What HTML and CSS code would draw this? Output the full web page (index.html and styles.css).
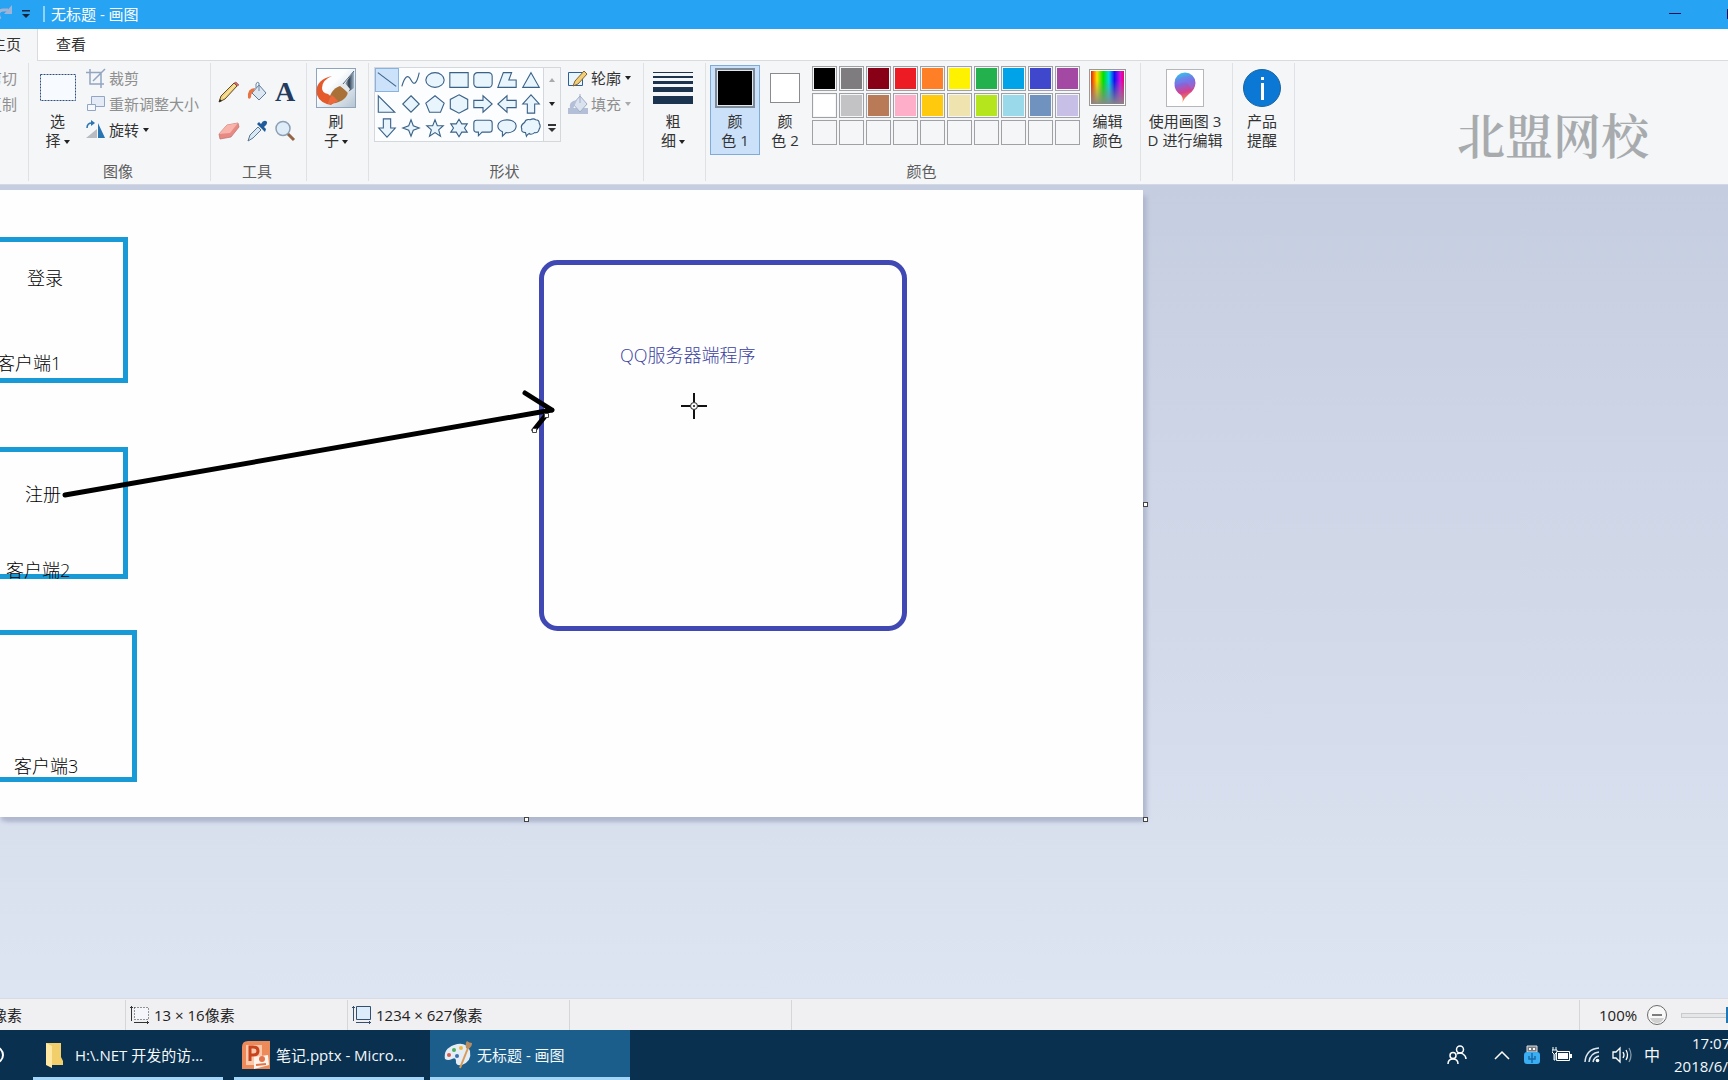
FILE: index.html
```html
<!DOCTYPE html>
<html lang="zh-CN">
<head>
<meta charset="utf-8">
<title>无标题 - 画图</title>
<link rel="stylesheet" href="styles.css">
</head>
<body>
<div class="app">
  <header class="titlebar">
    <button class="icon-btn" aria-label="重做"><svg width="14" height="20" viewBox="0 0 14 20"><path d="M0 15Q-4 7 3 6h5" fill="none" stroke="#9fb3d6" stroke-width="3"/><path d="M12 1v9H4z" fill="#9fb3d6"/></svg></button>
    <button class="icon-btn quick" aria-label="自定义快速访问工具栏"><svg width="8" height="8" viewBox="0 0 8 8"><path d="M0 0h8v1.500H0zM0 4h8L4 8z" fill="#12243c"/></svg></button>
    <span class="title-divider"></span>
    <h1 class="title">无标题 - 画图</h1>
    <div class="window-buttons">
      <button class="icon-btn" aria-label="最小化"><svg width="12" height="12" viewBox="0 0 12 12"><path d="M0 5.500h12" stroke="#1a1050"/></svg></button>
      <button class="icon-btn" aria-label="最大化"><svg width="10" height="10" viewBox="0 0 10 10"><rect x=".5" y=".5" width="9" height="9" fill="none" stroke="#1a1050" stroke-width="2"/></svg></button>
    </div>
  </header>

  <nav class="tabs">
    <button class="tab tab-active"><span>主页</span></button>
    <button class="tab">查看</button>
  </nav>

  <section class="ribbon">
    <div class="group clipboard">
      <div class="rows">
        <button class="small muted">剪切</button>
        <button class="small muted">复制</button>
      </div>
    </div>

    <div class="group image">
      <div class="tools-line">
        <button class="big">
          <span class="slot"><svg width="36" height="27" viewBox="0 0 36 27"><rect x=".5" y=".5" width="35" height="26" fill="#f7faff" stroke="#2c4f86" stroke-dasharray="2 1"/></svg></span>
          <span>选</span><span>择<i class="caret"></i></span>
        </button>
        <div class="rows">
          <button class="small muted"><svg width="20" height="20" viewBox="0 0 20 20"><path d="M4 1v15h14M0 4.500h15V20M7 13L19 1" fill="none" stroke="#93a5c0" stroke-width="1.500"/></svg>裁剪</button>
          <button class="small muted"><svg width="20" height="20" viewBox="0 0 20 20"><path d="M5.500 2.500h13v10h-13z" fill="#e4ebf7" stroke="#93a5c4"/><path d="M1.500 10.500h8v6h-8z" fill="#f4f7fc" stroke="#93a5c4"/></svg>重新调整大小</button>
          <button class="small"><svg width="20" height="20" viewBox="0 0 20 20"><path d="M0 18h11V9z" fill="#b8bcc2"/><path d="M12 18h7L12 3z" fill="#2a74b2"/><path d="M1 8q0-5 5-5" fill="none" stroke="#2a74b2" stroke-width="1.500"/><path d="M5 0l4 3-4 3z" fill="#2a74b2"/></svg>旋转<i class="caret"></i></button>
        </div>
      </div>
      <div class="group-label">图像</div>
    </div>

    <div class="group tools">
      <div class="tool-grid">
        <button class="icon-btn" aria-label="铅笔"><svg width="22" height="22" viewBox="0 0 22 22"><path d="M1 21l2-6L16 2l3 3L7 18z" fill="#f3d27c" stroke="#5f4a2c"/><path d="M16 2l2-1 3 3-2 1z" fill="#d96868" stroke="#823c3c" stroke-width=".5"/><path d="M1 21l1-3 2 2z" fill="#222"/><path d="M5 17L17 4" stroke="#fff0b8"/></svg></button>
        <button class="icon-btn" aria-label="用颜色填充"><svg width="22" height="22" viewBox="0 0 22 22"><path d="M6 12L13 4l7 8-7 7z" fill="#dce7f2" stroke="#5d7a9c"/><path d="M13 10V2q-2-2-3 1v4" fill="none" stroke="#6d87a5"/><path d="M9 7Q1 7 2 17q2 2 3-1 0-4 3-6z" fill="#e87343"/></svg></button>
        <button class="icon-btn letter" aria-label="文本">A</button>
        <button class="icon-btn" aria-label="橡皮擦"><svg width="22" height="22" viewBox="0 0 22 22"><path d="M1 14L9 5l11-2 1 4-8 10-11 2z" fill="#e78a84" stroke="#c06c69" stroke-width=".7"/><path d="M1 14L9 5l11-2-8 10z" fill="#f8b3ab"/></svg></button>
        <button class="icon-btn" aria-label="颜色选取器"><svg width="22" height="22" viewBox="0 0 22 22"><path d="M2 21l2-6 8-8 3 3-8 8z" fill="#d9e8f2" stroke="#597693"/><path d="M11 4l8 8 1-3-2-2q5-4 2-6-3-1-5 3l-2-2z" fill="#1f5b9b"/></svg></button>
        <button class="icon-btn" aria-label="放大镜"><svg width="22" height="22" viewBox="0 0 22 22"><path d="M13 13l7 7" stroke="#946444" stroke-width="3"/><circle cx="9" cy="8.500" r="7" fill="#dfedf8" stroke="#8c9fb4" stroke-width="1.500"/></svg></button>
      </div>
      <div class="group-label">工具</div>
    </div>

    <div class="group brushes">
      <button class="big">
        <span class="slot"><svg width="40" height="40" viewBox="0 0 40 40"><defs><linearGradient id="handle"><stop offset="0" stop-color="#d5e0ea"/><stop offset=".5" stop-color="#2d3e50"/><stop offset="1" stop-color="#a5b8ca"/></linearGradient><linearGradient id="board" x2="1" y2="1"><stop offset=".4" stop-color="#fbfdff"/><stop offset="1" stop-color="#b4c4d2"/></linearGradient></defs><rect x=".5" y=".5" width="39" height="39" fill="url(#board)" stroke="#8fa5bb"/><path d="M16 8Q-2 12 1 27q3 8 14 10l5-4-8-7q-6-1-6-6 0-8 10-12z" fill="#e45a2b"/><path d="M28 17L38 3v17l-6 4z" fill="url(#handle)"/><path d="M12 36q2-15 12-18l8 6q-2 11-20 12z" fill="#a97138"/><path d="M12 36q1-6 4-9l6 6q-4 3-10 3z" fill="#ee6a3e"/><path d="M24 17l4-3 6 7-2 4z" fill="#e3e7ea"/><path d="M27 16L38 3" stroke="#53687c"/></svg></span>
        <span>刷</span><span>子<i class="caret"></i></span>
      </button>
    </div>

    <div class="group shapes">
      <div class="tools-line">
        <div class="gallery">
          <div class="shape-grid">
            <button class="shape shape-active" aria-label="直线"><svg viewBox="0 0 24 24"><path d="M2 4l20 15"/></svg></button>
            <button class="shape" aria-label="曲线"><svg viewBox="0 0 24 24"><path class="line" d="M2 19Q7 2 12 12t9-8"/></svg></button>
            <button class="shape" aria-label="椭圆形"><svg viewBox="0 0 24 24"><ellipse cx="12" cy="12" rx="10" ry="8"/></svg></button>
            <button class="shape" aria-label="矩形"><svg viewBox="0 0 24 24"><path d="M2 4h20v16H2z"/></svg></button>
            <button class="shape" aria-label="圆角矩形"><svg viewBox="0 0 24 24"><rect x="2" y="4" width="20" height="16" rx="4"/></svg></button>
            <button class="shape" aria-label="多边形"><svg viewBox="0 0 24 24"><path d="M8 4h9l-3 8h8v8H2z"/></svg></button>
            <button class="shape" aria-label="三角形"><svg viewBox="0 0 24 24"><path d="M12 4l9 16H3z"/></svg></button>
            <button class="shape" aria-label="直角三角形"><svg viewBox="0 0 24 24"><path d="M2.500 3v18h18z"/></svg></button>
            <button class="shape" aria-label="菱形"><svg viewBox="0 0 24 24"><path d="M12 3l9 9-9 9-9-9z"/></svg></button>
            <button class="shape" aria-label="五边形"><svg viewBox="0 0 24 24"><path d="M12 3l10 8-4 10H6L2 11z"/></svg></button>
            <button class="shape" aria-label="六边形"><svg viewBox="0 0 24 24"><path d="M12 2l9.500 5v10L12 22l-9.500-5V7z"/></svg></button>
            <button class="shape" aria-label="右箭头"><svg viewBox="0 0 24 24"><path d="M2 8h10V3l10 9-10 9v-5H2z"/></svg></button>
            <button class="shape" aria-label="左箭头"><svg viewBox="0 0 24 24"><path d="M22 8H12V3L2 12l10 9v-5h10z"/></svg></button>
            <button class="shape" aria-label="上箭头"><svg viewBox="0 0 24 24"><path d="M8 22V12H3l9-10 9 10h-5v10z"/></svg></button>
            <button class="shape" aria-label="下箭头"><svg viewBox="0 0 24 24"><path d="M8 2v10H3l9 10 9-10h-5V2z"/></svg></button>
            <button class="shape" aria-label="四角星形"><svg viewBox="0 0 24 24"><path d="M12 3l2.500 6.500L21 12l-6.500 2.500L12 21l-2.500-6.500L3 12l6.500-2.500z"/></svg></button>
            <button class="shape" aria-label="五角星形"><svg viewBox="0 0 24 24"><path d="M12 3l2.500 6.500H21l-5 4.500 2 7-6-4-6 4 2-7-5-4.500h6.500z"/></svg></button>
            <button class="shape" aria-label="六角星形"><svg viewBox="0 0 24 24"><path d="M12 2.500L15 7.500h6L18 12l3 4.500h-6l-3 5-3-5H3L6 12 3 7.500h6z"/></svg></button>
            <button class="shape" aria-label="圆角矩形标注"><svg viewBox="0 0 24 24"><path d="M5 3.500h14q3 0 3 3v7q0 3-3 3h-8l-4 4v-4H5q-3 0-3-3v-7q0-3 3-3z"/></svg></button>
            <button class="shape" aria-label="椭圆形标注"><svg viewBox="0 0 24 24"><path d="M7 16Q2 14 2 9.500C3 1 21 1 22 9.500 22 15 16 18 11 17l-4 4z"/></svg></button>
            <button class="shape" aria-label="云形标注"><svg viewBox="0 0 24 24"><path d="M5 6q1-4 6-3 4-2 6 0 4 0 4 4 2 3 0 6-1 5-5 4-4 3-6 1-2 1-3 3l-1-4q-5 0-4-4-2-4 3-7z"/></svg></button>
          </div>
          <div class="scroller">
            <button class="icon-btn" aria-label="向上"><i class="caret up"></i></button>
            <button class="icon-btn" aria-label="向下"><i class="caret"></i></button>
            <button class="icon-btn" aria-label="更多"><svg width="8" height="8" viewBox="0 0 8 8"><path d="M0 0h8v2H0zM0 4h8L4 8z" fill="#333"/></svg></button>
          </div>
        </div>
        <div class="rows">
          <button class="small"><svg width="20" height="20" viewBox="0 0 20 20"><path d="M.5 4.500h14v13H.5z" fill="#e9f4fd" stroke="#2d5f94"/><path d="M5 18l2-5 9-10 3 3-9 10z" fill="#f1cf78" stroke="#87622a"/></svg>轮廓<i class="caret"></i></button>
          <button class="small muted"><svg width="20" height="20" viewBox="0 0 20 20"><path d="M0 14h20v6H0z" fill="#b3bfd6"/><path d="M5 10l7-8 7 8-7 8z" fill="#dae2f0" stroke="#a0aec6"/><path d="M2 15Q0 7 9 6l-4 9z" fill="#b3bfd6"/><path d="M12 9V0" stroke="#a0aec6"/></svg>填充<i class="caret"></i></button>
        </div>
      </div>
      <div class="group-label">形状</div>
    </div>

    <div class="group size">
      <button class="big">
        <span class="slot"><svg width="40" height="32" viewBox="0 0 40 32"><path d="M0 0h40v1H0zM0 4h40v2H0zM0 9h40v3H0zM0 15h40v5H0zM0 24h40v8H0z" fill="#1c3450"/></svg></span>
        <span>粗</span><span>细<i class="caret"></i></span>
      </button>
    </div>

    <div class="group colors">
      <div class="tools-line">
        <button class="big color-one"><span class="slot"><i class="ink"></i></span><span>颜</span><span>色 1</span></button>
        <button class="big color-two"><span class="slot"><i class="ink ink-white"></i></span><span>颜</span><span>色 2</span></button>
        <div class="palette">
          <button class="swatch black" aria-label="黑色"></button><button class="swatch gray" aria-label="灰色"></button><button class="swatch maroon" aria-label="深红色"></button><button class="swatch red" aria-label="红色"></button><button class="swatch orange" aria-label="橙色"></button><button class="swatch yellow" aria-label="黄色"></button><button class="swatch green" aria-label="绿色"></button><button class="swatch azure" aria-label="青绿色"></button><button class="swatch indigo" aria-label="靛青色"></button><button class="swatch purple" aria-label="紫色"></button>
          <button class="swatch white" aria-label="白色"></button><button class="swatch silver" aria-label="浅灰色"></button><button class="swatch brown" aria-label="褐色"></button><button class="swatch rose" aria-label="玫瑰色"></button><button class="swatch gold" aria-label="金色"></button><button class="swatch cream" aria-label="浅黄色"></button><button class="swatch lime" aria-label="酸橙色"></button><button class="swatch sky" aria-label="淡青绿色"></button><button class="swatch steel" aria-label="蓝灰色"></button><button class="swatch lilac" aria-label="淡紫色"></button>
          <button class="swatch" aria-label="自定义 1"></button><button class="swatch" aria-label="自定义 2"></button><button class="swatch" aria-label="自定义 3"></button><button class="swatch" aria-label="自定义 4"></button><button class="swatch" aria-label="自定义 5"></button><button class="swatch" aria-label="自定义 6"></button><button class="swatch" aria-label="自定义 7"></button><button class="swatch" aria-label="自定义 8"></button><button class="swatch" aria-label="自定义 9"></button><button class="swatch" aria-label="自定义 10"></button>
        </div>
        <button class="big edit-colors"><span class="slot"><i class="spectrum"></i></span><span>编辑</span><span>颜色</span></button>
      </div>
      <div class="group-label">颜色</div>
    </div>

    <div class="group paint3d">
      <button class="big">
        <span class="slot"><svg width="38" height="38" viewBox="0 0 38 38"><defs><linearGradient id="drop" x1=".3" y1="0" x2=".5" y2="1"><stop offset="0" stop-color="#35c3ee"/><stop offset=".35" stop-color="#7c6be0"/><stop offset=".65" stop-color="#d7408c"/><stop offset="1" stop-color="#f6a53c"/></linearGradient></defs><rect x=".5" y=".5" width="37" height="37" fill="#fff" stroke="#b5b7bb"/><path d="M16 34q2-4-1-8Q8 22 8.500 14A10.500 10.500 0 0 1 29.500 14Q29 21 23 25q-5 4-7 9z" fill="url(#drop)"/><path d="M9 16Q15 4 27 9q4 8-2 12-2-9-9-7-5 2-7 2z" fill="#7a7cf0" opacity=".4"/></svg></span>
        <span>使用画图 3</span><span>D 进行编辑</span>
      </button>
    </div>

    <div class="group notice">
      <button class="big">
        <span class="slot"><svg width="38" height="38" viewBox="0 0 38 38"><circle cx="19" cy="19" r="18.500" fill="#0a78d4" stroke="#1b659f"/><path d="M18 8h3v3h-3zM18 14h3v17h-3z" fill="#fff"/></svg></span>
        <span>产品</span><span>提醒</span>
      </button>
    </div>

    <div class="watermark">北盟网校</div>
  </section>

  <main class="workspace">
    <div class="paper">
      <svg class="drawing" width="1143" height="627" viewBox="0 0 1143 627">
        <g fill="none" stroke-width="5">
          <g stroke="#189ad6">
            <path d="M-10 49.500H125.500v141H-10"/>
            <path d="M-10 259.500H125.500v127H-10"/>
            <path d="M-10 442.500H134.500v147H-10"/>
          </g>
          <rect x="541.500" y="72.500" width="363" height="366" rx="16" stroke="#4048b4"/>
          <path d="M65 305L552 220M525 203l27 17M546 225l-12 15" stroke="#000" stroke-linecap="round"/>
        </g>
        <g fill="#fff" stroke="#444"><path d="M544.500 223.500h4v4h-4zM532.500 238.500h4v4h-4z"/></g>
        <path d="M694 203v9M694 220v9M681 216h9M698 216h9" stroke="#111" stroke-width="2"/>
        <circle cx="694" cy="216" r="3.500" fill="#fff" stroke="#222"/><circle cx="694" cy="216" r="1" fill="#111"/>
      </svg>
      <span class="note note-login">登录</span>
      <span class="note note-client1">客户端1</span>
      <span class="note note-register">注册</span>
      <span class="note note-client2">客户端2</span>
      <span class="note note-client3">客户端3</span>
      <span class="note note-server">QQ服务器端程序</span>
      <i class="grip grip-right"></i><i class="grip grip-bottom"></i><i class="grip grip-corner"></i>
    </div>
  </main>

  <footer class="statusbar">
    <div class="cell cell-pos"><span>像素</span></div>
    <div class="cell"><svg width="20" height="20" viewBox="0 0 20 20"><path d="M1.500 1v15M4 17.500h15M0 2.500h3M17.500 16v3" stroke="#333"/><path d="M4.500 2.500h14v12h-14z" fill="#f4f6fa" stroke="#333" stroke-dasharray="1 2"/></svg>13 × 16像素</div>
    <div class="cell"><svg width="20" height="20" viewBox="0 0 20 20"><path d="M1.500 1v15M4 17.500h15M0 2.500h3M17.500 16v3" stroke="#34506e"/><path d="M4.500 1.500h14v13h-14z" fill="#dcecfb" stroke="#34506e"/></svg>1234 × 627像素</div>
    <div class="cell"></div>
    <div class="zoom">
      <span>100%</span>
      <button class="icon-btn" aria-label="缩小"><svg width="20" height="20" viewBox="0 0 20 20"><circle cx="10" cy="10" r="9.500" fill="#f8f8f8" stroke="#6c6c6c"/><path d="M3 13h14q-2 5-7 5t-7-5z" fill="#d0d0d0"/><path d="M5 10h10" stroke="#555" stroke-width="1.500"/></svg></button>
      <div class="track"><i class="thumb"></i></div>
    </div>
  </footer>

  <div class="taskbar">
    <svg class="cortana" width="4" height="18" viewBox="0 0 4 18"><path d="M-5 1a8 8 0 0 1 0 16" fill="none" stroke="#fff" stroke-width="2"/></svg>
    <button class="task task-folder"><svg width="20" height="26" viewBox="0 0 20 26"><path d="M1 1h15v14l2 4v4H6z" fill="#f2cf6a"/><path d="M1 1l6 3v22l-6-3z" fill="#ffe9a2"/></svg>H:\.NET 开发的访...</button>
    <button class="task task-ppt"><svg width="28" height="28" viewBox="0 0 28 28"><path d="M6 0h22v28H0V6q0-6 6-6z" fill="#ec8a5a"/><path d="M4 4h16v20H4z" fill="#f9c9ae"/><path d="M8 20V6h3q5 0 5 4t-5 4H8" fill="none" stroke="#c8441c" stroke-width="3"/><path d="M12 16l14-2 1 10-15 4z" fill="#fff4ec"/><circle cx="20" cy="18" r="3" fill="#e2734a"/><path d="M14 24l10-1" stroke="#e2734a" stroke-width="2"/></svg>笔记.pptx - Micro...</button>
    <button class="task task-active"><svg width="30" height="28" viewBox="0 0 30 28"><path d="M11 4Q23 0 27 10q2 10-8 14-7 1-6-4 0-4-4-2-4 2-7 0Q0 8 11 4z" fill="#e4edf5"/><circle cx="6" cy="14" r="2" fill="#d65b4d"/><circle cx="11" cy="9" r="2" fill="#4fae5a"/><circle cx="18" cy="7" r="2" fill="#efb83d"/><circle cx="14" cy="15" r="2" fill="#3b6fb0"/><path d="M17 27L25 7" stroke="#d99a55" stroke-width="2"/><path d="M23 7q-1-5 1-7 2 2 5 2 0 4-4 6z" fill="#b98d62"/></svg>无标题 - 画图</button>

    <div class="tray">
      <button class="icon-btn" aria-label="人脉"><svg width="20" height="20" viewBox="0 0 20 20"><g fill="none" stroke="#fff" stroke-width="1.500"><circle cx="13" cy="4.500" r="3.500"/><circle cx="6" cy="10.500" r="3"/><path d="M1 19q0-5 5-5t5 5M10 9q3-2 6 0 3 2 3 5"/></g></svg></button>
      <button class="icon-btn chevron" aria-label="显示隐藏的图标"><svg width="16" height="10" viewBox="0 0 16 10"><path d="M1 9l7-7 7 7" fill="none" stroke="#fff" stroke-width="1.500"/></svg></button>
      <button class="icon-btn" aria-label="USB"><svg width="16" height="20" viewBox="0 0 16 20"><path d="M3 1h10v6H3z" fill="#767c82" stroke="#ddd"/><path d="M5 3h2v2H5zM9 3h2v2H9z" fill="#fff"/><rect y="7" width="16" height="12" rx="3" fill="#3badf2"/><path d="M8 8v10M5 11v3h6v-3" fill="none" stroke="#176ba8" stroke-width="1.500"/></svg></button>
      <button class="icon-btn" aria-label="电源"><svg width="20" height="16" viewBox="0 0 20 16"><path d="M4.500 4.500h13v9h-13z" fill="none" stroke="#fff"/><path d="M6 6h10v6H6zM18 7h2v4h-2z" fill="#fff"/><path d="M1 0v3M4 0v3M0 3h5v2L3 7v6H2V7L0 5z" fill="#09304f" stroke="#fff"/></svg></button>
      <button class="icon-btn" aria-label="网络"><svg width="16" height="16" viewBox="0 0 16 16"><g fill="none" stroke="#dbe6ee" stroke-width="1.500"><path d="M1 15Q2 2 15 1M5 15Q6 6 15 5M9 15Q10 10 15 9"/></g><circle cx="13.500" cy="13.500" r="1.800" fill="#fff"/></svg></button>
      <button class="icon-btn" aria-label="音量"><svg width="20" height="18" viewBox="0 0 20 18"><g fill="none" stroke="#fff" stroke-width="1.300"><path d="M1 6h3l4-4v14l-4-4H1zM11 6q2 3 0 6M14 4q3 5 0 10"/><path d="M17 2q4 7 0 14" opacity=".5"/></g></svg></button>
      <button class="icon-btn ime">中</button>
      <div class="clock"><time>17:07</time><span>2018/6/</span></div>
    </div>
  </div>
</div>
</body>
</html>
```
FILE: styles.css
```css
* { box-sizing: border-box; }

body {
  margin: 0;
  overflow: hidden;
  font: 15px/20px "Open Sans", "Noto Sans CJK SC", sans-serif;
  color: #333;
}

button {
  margin: 0;
  padding: 0;
  border: 0;
  background: none;
  font: inherit;
  color: inherit;
  white-space: nowrap;
}

svg { flex: none; display: block; }

.app { display: flex; flex-direction: column; height: 100vh; overflow: hidden; }

.icon-btn { display: flex; align-items: center; justify-content: center; flex: none; }

.caret {
  display: inline-block;
  margin-left: 3px;
  vertical-align: middle;
  border: 3px solid transparent;
  border-top: 4px solid #222;
  border-bottom: 0;
}
.caret.up { border-top: 0; border-bottom: 4px solid #aaa; }
.muted .caret { border-top-color: #aaa; }

/* title bar */
.titlebar {
  display: flex;
  align-items: center;
  flex: none;
  height: 29px;
  padding-bottom: 1px;
  background: #26a3f2;
}
.quick { margin-left: 8px; }
.title-divider { width: 2px; height: 16px; margin: 0 6px 0 13px; background: #8fd2fa; }
.title { margin: 0; font-size: 15px; line-height: 20px; font-weight: 400; color: #fff; }
.window-buttons { display: flex; gap: 46px; margin: 0 -9px 0 auto; }

/* tabs */
.tabs { display: flex; flex: none; height: 32px; background: #fff; }
.tab { padding: 0 18px 2px; border-bottom: 1px solid #dadbdc; }
.tab-active {
  display: flex;
  align-items: center;
  justify-content: flex-end;
  width: 38px;
  padding: 0 16px 2px 0;
  border-right: 1px solid #dadbdc;
  border-bottom: 0;
  background: #f5f6f7;
}
.tabs::after { content: ""; flex: 1; border-bottom: 1px solid #dadbdc; }

/* ribbon */
.ribbon {
  display: flex;
  flex: none;
  height: 124px;
  padding-top: 2px;
  background: #f4f6f8;
  border-bottom: 1px solid #d5d8e2;
}
.group {
  display: flex;
  flex-direction: column;
  flex: none;
  height: 118px;
  padding: 2px 7px 0 4px;
  border-right: 1px solid #dfe1e4;
}
.group-label { margin-top: auto; text-align: center; color: #5c5c5c; }
.tools-line { display: flex; }
.big { display: flex; flex-direction: column; align-items: center; height: 90px; line-height: 19px; }
.slot { display: flex; align-items: center; justify-content: center; height: 47px; padding-bottom: 2px; }
.rows { display: flex; flex-direction: column; }
.small { display: flex; align-items: center; gap: 3px; height: 26px; }
.small .caret { margin-left: 1px; }
.muted { color: #8f8f8f; }

.clipboard { width: 29px; padding-right: 11px; align-items: flex-end; overflow: hidden; }
.image { width: 182px; }
.image .big { width: 49px; }
.image .rows { margin-left: 4px; }
.tools { width: 96px; }
.tool-grid { display: grid; grid-template: 39px 39px / repeat(3, 28px); padding-top: 7px; }
.letter { font: bold 28px "Liberation Serif", serif; color: #223b5e; }
.brushes { width: 62px; }
.shapes { width: 275px; }
.size { width: 62px; }
.colors { width: 435px; }
.paint3d { width: 92px; align-items: center; }
.notice { width: 62px; }

.gallery { display: flex; height: 75px; margin-top: 2px; margin-left: 1px; border: 1px solid #d4d8dc; }
.shape-grid { display: grid; grid-template: repeat(3, 24px) / repeat(7, 24px); background: #fbfdff; }
.shape { border: 1px solid transparent; }
.shape-active { background: #cbe2fa; border-color: #87b3de; }
.shape svg { width: 22px; height: 22px; fill: #e8f5fd; stroke: #3a6187; stroke-width: 1.2; }
.shape .line { fill: none; }
.scroller {
  display: grid;
  grid-template-rows: repeat(3, 24px);
  width: 17px;
  border-left: 1px solid #d4d8dc;
}
.scroller .caret { margin: 0; }
.shapes .rows { margin-left: 7px; }

.color-one { width: 50px; background: #cbe1f9; border: 1px solid #7eabd8; }
.color-one .slot { height: 46px; }
.color-two { width: 50px; }
.ink { width: 40px; height: 40px; border: 2px solid #7e8a98; background: #000; outline: 1px solid #dfe6ee; outline-offset: -3px; }
.ink-white { width: 30px; height: 30px; background: #fff; border: 1px solid #8b8b8d; outline: 0; }
.palette {
  display: grid;
  grid-template: repeat(3, 25px) / repeat(10, 25px);
  gap: 2px;
  margin: 1px 0 0 2px;
}
.swatch { border: 1px solid #9fa1a5; padding: 1px; background-clip: content-box; }
.black { background-color: #000; }
.gray { background-color: #7f7c80; }
.maroon { background-color: #880015; }
.red { background-color: #ed1c24; }
.orange { background-color: #ff7f27; }
.yellow { background-color: #fff200; }
.green { background-color: #22b14c; }
.azure { background-color: #00a2e8; }
.indigo { background-color: #3f48cc; }
.purple { background-color: #a349a4; }
.white { background-color: #fff; }
.silver { background-color: #c3c3c5; }
.brown { background-color: #b97a57; }
.rose { background-color: #ffaec9; }
.gold { background-color: #ffc90e; }
.cream { background-color: #efe4b0; }
.lime { background-color: #b5e61d; }
.sky { background-color: #99d9ea; }
.steel { background-color: #7092be; }
.lilac { background-color: #c8bfe7; }
.edit-colors { margin-left: 9px; }
.spectrum {
  width: 37px;
  height: 37px;
  border: 1px solid #999;
  outline: 1px solid #fff;
  outline-offset: -2px;
  background:
    linear-gradient(transparent 30%, #888),
    linear-gradient(90deg, #e80000, #ffe000 20%, #00e000 38%, #00d8e8 54%, #1010f0 70%, #d010e0 86%, #f00050);
}

.watermark {
  margin: 39px 79px 0 auto;
  font: 600 48px/64px "Noto Serif CJK SC", "Liberation Serif", "Noto Sans CJK SC", serif;
  color: #a8abad;
}

/* canvas area */
.workspace {
  flex: 1;
  min-height: 0;
  padding-top: 5px;
  overflow: hidden;
  background: linear-gradient(#c5cde0, #dde5f2);
}
.paper {
  position: relative;
  width: 1143px;
  height: 627px;
  background: #fefefe;
  box-shadow: 5px 5px 4px -1px #b0b9cf, 0 5px 4px -1px #b0b9cf;
}
.drawing { overflow: hidden; }
.note { position: absolute; font-size: 18px; font-weight: 300; line-height: 24px; color: #000; white-space: nowrap; }
.note-login { left: 27px; top: 76px; }
.note-client1 { left: -3px; top: 161px; }
.note-register { left: 25px; top: 292px; }
.note-client2 { left: 6px; top: 368px; }
.note-client3 { left: 14px; top: 564px; }
.note-server { left: 620px; top: 153px; color: #3a3f9e; }
.grip { position: absolute; width: 5px; height: 5px; background: #fff; border: 1px solid #444; }
.grip-right { right: -5px; top: 312px; }
.grip-bottom { left: 524px; bottom: -5px; }
.grip-corner { right: -5px; bottom: -5px; }

/* status bar */
.statusbar {
  display: flex;
  flex: none;
  height: 32px;
  padding-top: 1px;
  background: #f0eff1;
  border-top: 1px solid #d8dbe3;
  color: #222;
}
.cell {
  display: flex;
  align-items: center;
  gap: 4px;
  width: 222px;
  padding-left: 4px;
  border-right: 1px solid #d6d6d9;
}
.cell-pos { width: 126px; padding-left: 0; overflow: hidden; }
.cell-pos span { margin-left: -8px; }
.zoom {
  display: flex;
  align-items: center;
  width: 149px;
  margin-left: auto;
  padding-left: 19px;
  border-left: 1px solid #d6d6d9;
}
.zoom .icon-btn { margin: 0 14px 0 auto; }
.track { display: flex; align-items: center; justify-content: flex-end; width: 47px; height: 5px; background: #e4e6e8; border: 1px solid #c8cbce; border-right: 0; }
.thumb { flex: none; width: 2px; height: 16px; background: #1e78b8; }

/* task bar */
.taskbar {
  display: flex;
  align-items: center;
  flex: none;
  height: 50px;
  overflow: hidden;
  background: #09304f;
  color: #f4f8fb;
}
.cortana { margin-right: 29px; }
.task {
  display: flex;
  align-items: center;
  gap: 6px;
  flex: none;
  width: 190px;
  height: 50px;
  padding-left: 8px;
  border-bottom: 3px solid #a2d5f8;
  border-top: 3px solid transparent;
}
.task-folder { padding-left: 12px; gap: 10px; margin-right: 11px; }
.task-active { width: 200px; margin-left: 6px; padding-left: 13px; gap: 4px; background: #1b5e8c; background-clip: border-box; }
.tray { display: flex; align-items: center; gap: 12px; margin-left: auto; }
.chevron { margin: 0 2px 0 15px; }
.ime { font-size: 16px; }
.clock {
  display: flex;
  flex-direction: column;
  width: 54px;
  margin-left: 2px;
  font-size: 15px;
  line-height: 23px;
  white-space: nowrap;
  overflow: hidden;
}
.clock time { padding-left: 18px; }
```
